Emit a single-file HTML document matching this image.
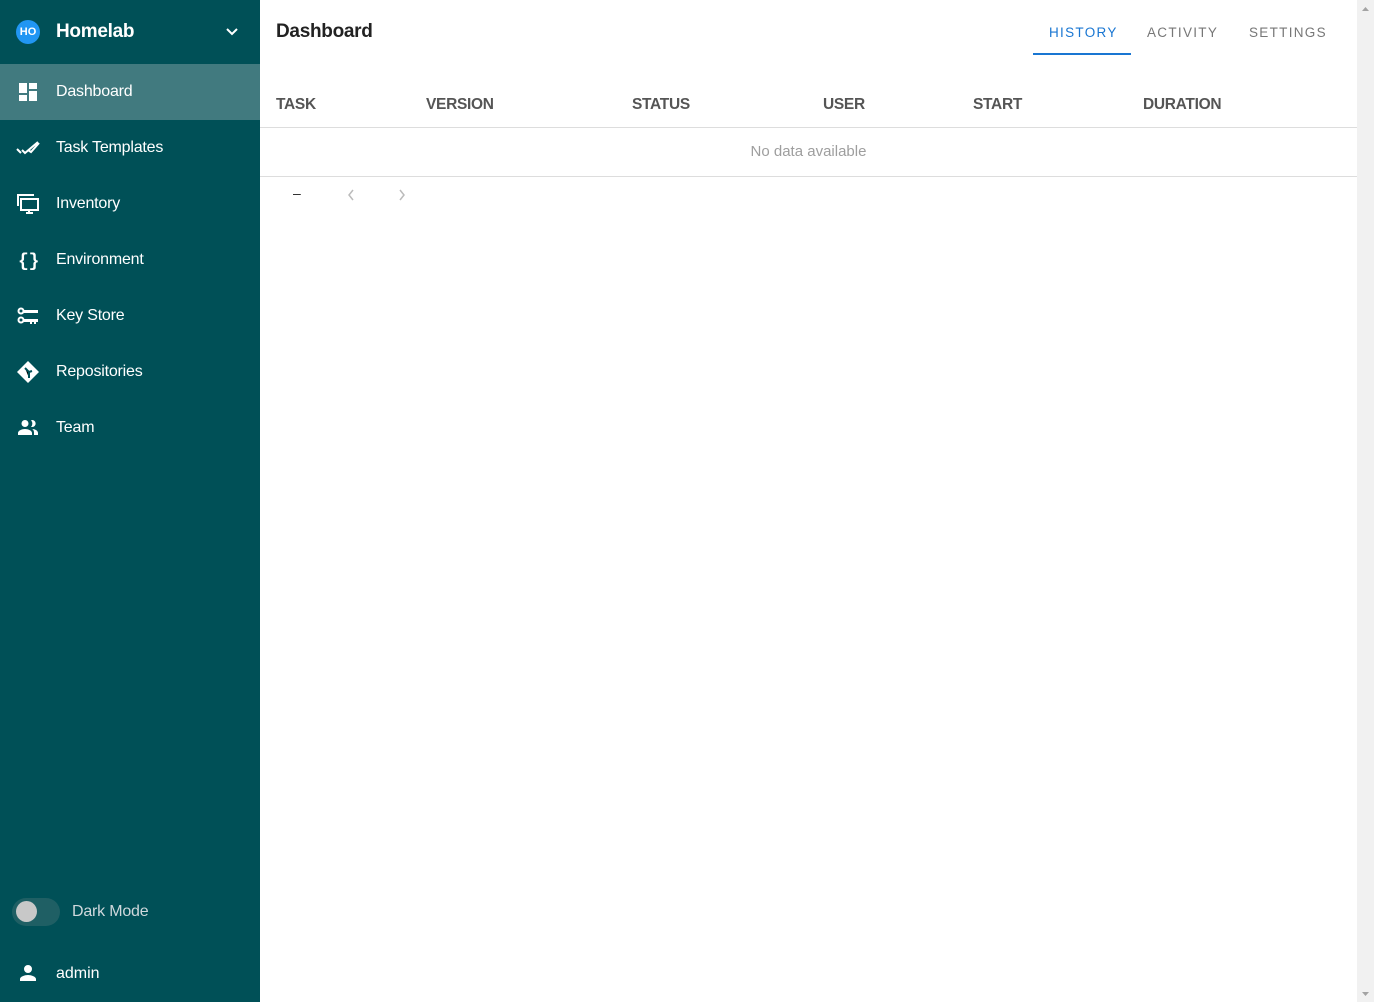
<!DOCTYPE html>
<html><head><meta charset="utf-8"><style>
*{box-sizing:border-box;margin:0;padding:0}
body{width:1374px;height:1002px;overflow:hidden;font-family:"Liberation Sans",Roboto,sans-serif;background:#fff;position:relative}
.sb{position:absolute;left:0;top:0;width:260px;height:1002px;background:#005057;color:#fff}
.hdr{height:64px;position:relative}
.av{position:absolute;left:16px;top:20px;width:24px;height:24px;border-radius:50%;background:#2196f3;font-size:11px;font-weight:bold;text-align:center;line-height:24px}
.hdr .t{position:absolute;left:56px;top:21px;font-size:19px;font-weight:bold;letter-spacing:-0.3px}
.item{height:56px;position:relative;font-size:16px;letter-spacing:-0.2px}
.item.sel{background:#417a7f}
.item span{position:absolute;left:56px;top:19px}
.item svg{position:absolute;left:16px;top:16px}
.main{position:absolute;left:260px;top:0;width:1097px;height:1002px}
.title{position:absolute;left:16px;top:21px;font-size:19px;font-weight:bold;color:#222;letter-spacing:-0.3px}
.tab{position:absolute;top:25px;font-size:13.5px;letter-spacing:1.3px;color:#777}
.th{position:absolute;top:96px;font-size:15.5px;font-weight:bold;color:#555;letter-spacing:-0.3px}
.scroll{position:absolute;left:1357px;top:0;width:17px;height:1002px;background:#f1f1f1}
</style></head><body>
<div class="sb">
 <div class="hdr"><div class="av">HO</div><div class="t">Homelab</div>
 <svg style="position:absolute;left:224px;top:25px" width="16" height="14" viewBox="0 0 16 14"><path d="M3 4l5 5 5-5" stroke="#fff" stroke-width="2" fill="none"/></svg></div>
 <div class="item sel"><svg width="24" height="24" viewBox="0 0 24 24"><path fill="#fff" d="M3 13h8V3H3zm0 8h8v-6H3zm10 0h8V11h-8zm0-18v6h8V3z"/></svg><span>Dashboard</span></div>
 <div class="item"><svg width="24" height="24" viewBox="0 0 24 24"><path fill="none" stroke="#fff" stroke-width="2" d="M1 13l4 4M6 14l3 3L22 6M12 14l3 2 8-9"/></svg><span>Task Templates</span></div>
 <div class="item"><svg width="24" height="24" viewBox="0 0 24 24"><path fill="none" stroke="#fff" stroke-width="2" d="M2 14V3h16M5 7h17v11H5zM10 21h7M13 18v3"/></svg><span>Inventory</span></div>
 <div class="item"><svg width="24" height="24" viewBox="0 0 24 24"><text x="2" y="18" fill="#fff" font-size="18" font-family="Liberation Mono" font-weight="bold">{}</text></svg><span>Environment</span></div>
 <div class="item"><svg width="24" height="24" viewBox="0 0 24 24"><g fill="none" stroke="#fff" stroke-width="2"><circle cx="5" cy="7" r="2.5"/><circle cx="5" cy="16" r="2.5"/></g><path fill="#fff" d="M8 6h14v3H8zM8 15h14v3h-2v2h-2v-2h-2v2h-2v-2H8z"/></svg><span>Key Store</span></div>
 <div class="item"><svg width="24" height="24" viewBox="0 0 24 24"><path fill="#fff" d="M12 1l11 11-11 11L1 12z"/><path stroke="#005057" stroke-width="2" d="M9 8l4 4v6M13 12l3-1"/></svg><span>Repositories</span></div>
 <div class="item"><svg width="24" height="24" viewBox="0 0 24 24"><path fill="#fff" d="M9 11a3.5 3.5 0 1 0 0-7 3.5 3.5 0 0 0 0 7zm7 0a3.5 3.5 0 1 0-1-6.8A5 5 0 0 1 15 11zM9 13c-3 0-7 1.5-7 4v2h14v-2c0-2.5-4-4-7-4zm7 0c2 1 2 3 2 4v2h4v-2c0-2.5-3-4-6-4z"/></svg><span>Team</span></div>
 <div style="position:absolute;left:12px;top:898px;width:48px;height:28px;border-radius:14px;background:#1f5f64"></div>
 <div style="position:absolute;left:16px;top:901px;width:21px;height:21px;border-radius:50%;background:#c8c8c8"></div>
 <div style="position:absolute;left:72px;top:903px;font-size:16px;color:#cfd8dc;letter-spacing:-0.2px">Dark Mode</div>
 <svg style="position:absolute;left:16px;top:961px" width="24" height="24" viewBox="0 0 24 24"><path fill="#fff" d="M12 12a4 4 0 1 0 0-8 4 4 0 0 0 0 8zm0 2c-3 0-8 1.5-8 4v2h16v-2c0-2.5-5-4-8-4z"/></svg>
 <div style="position:absolute;left:56px;top:965px;font-size:16px">admin</div>
</div>
<div class="main">
 <div class="title">Dashboard</div>
 <div class="tab" style="left:789px;color:#1976d2">HISTORY</div>
 <div style="position:absolute;left:773px;top:53px;width:98px;height:2px;background:#1976d2"></div>
 <div class="tab" style="left:887px">ACTIVITY</div>
 <div class="tab" style="left:989px">SETTINGS</div>
 <div class="th" style="left:16px">TASK</div>
 <div class="th" style="left:166px">VERSION</div>
 <div class="th" style="left:372px">STATUS</div>
 <div class="th" style="left:563px">USER</div>
 <div class="th" style="left:713px">START</div>
 <div class="th" style="left:883px">DURATION</div>
 <div style="position:absolute;left:0;top:127px;width:1097px;height:1px;background:#ddd"></div>
 <div style="position:absolute;left:0;top:143px;width:1097px;text-align:center;font-size:15px;color:#9e9e9e">No data available</div>
 <div style="position:absolute;left:0;top:176px;width:1097px;height:1px;background:#ddd"></div>
 <div style="position:absolute;left:33px;top:185px;font-size:14px;color:#222">–</div>
 <svg style="position:absolute;left:86px;top:188px" width="10" height="14"><path d="M7 2L3 7l4 5" stroke="#bbb" stroke-width="1.5" fill="none"/></svg>
 <svg style="position:absolute;left:137px;top:188px" width="10" height="14"><path d="M3 2l4 5-4 5" stroke="#bbb" stroke-width="1.5" fill="none"/></svg>
</div>
<div class="scroll"><svg width="17" height="1002"><path d="M5 11l3.5-4 3.5 4z" fill="#a3a3a3"/><path d="M5 992l3.5 4 3.5-4z" fill="#a3a3a3"/></svg></div>
</body></html>
